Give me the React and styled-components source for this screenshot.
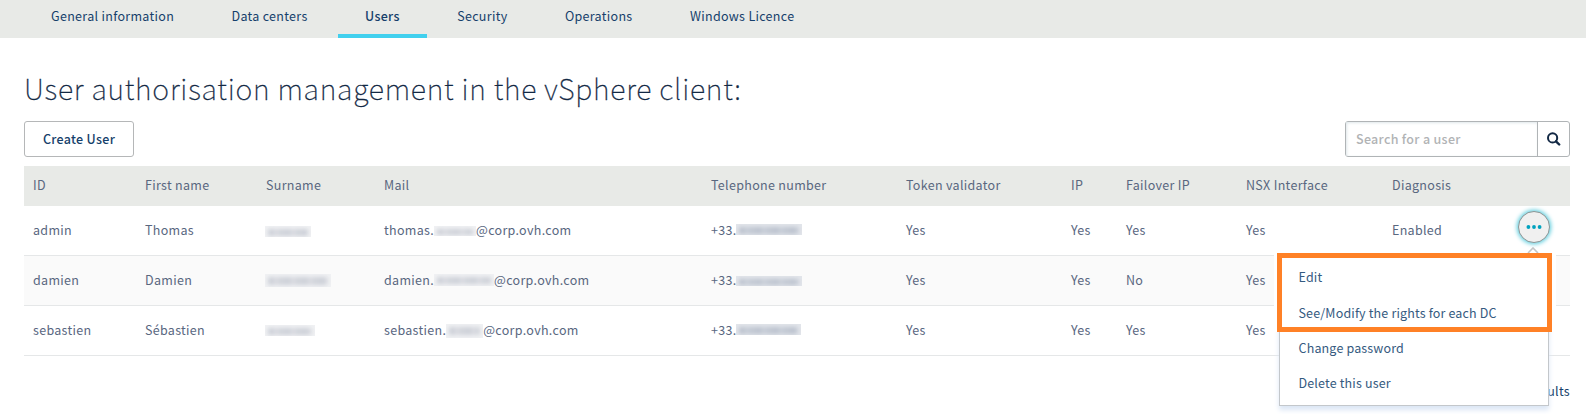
import React from "react";
import styled, { createGlobalStyle } from "styled-components";

const Global = createGlobalStyle`
  * { box-sizing: border-box; }
  html, body { margin: 0; background: #fff; overflow: hidden; }
  body {
    font-family: "Noto Sans CJK SC", "Noto Sans", sans-serif;
    font-size: 12.5px;
    letter-spacing: 0.31px;
    color: #59677f;
  }
`;

const Page = styled.div`
  height: 414px;
  overflow: hidden;
`;

const Tabs = styled.nav`
  display: flex;
  gap: 2.4px;
  height: 38px;
  padding-left: 23.5px;
  background: #e8eae7;
`;

const Tab = styled.a`
  height: 38px;
  padding: 0 27.5px;
  line-height: 31px;
  white-space: nowrap;
  color: #163f6b;
  font-weight: ${(p) => (p.$active ? 500 : 400)};
  border-bottom: 4px solid ${(p) => (p.$active ? "#41d0ee" : "transparent")};
`;

const Main = styled.main`
  padding: 0 16px 0 24px;
`;

const Title = styled.h1`
  height: 83px;
  margin: 0;
  padding-top: 29px;
  line-height: 42px;
  font-size: 28.6px;
  font-weight: 100;
  -webkit-text-stroke: 0.3px #122844;
  letter-spacing: 0.78px;
  color: #122844;
  white-space: nowrap;
`;

const Toolbar = styled.div`
  display: flex;
  justify-content: space-between;
  height: 45px;
`;

const Button = styled.button`
  width: 110px;
  height: 36px;
  padding: 0 0 2px;
  border: 1px solid #b5b7b8;
  border-radius: 3px;
  background: #fff;
  font: inherit;
  font-weight: 500;
  letter-spacing: 0.3px;
  color: #163f6b;
`;

const Search = styled.div`
  display: flex;
  width: 225px;
  height: 36px;
  border: 1px solid #b0b4b6;
  border-radius: 3px;
`;

const Field = styled.div`
  flex: 1;
  padding-left: 10px;
  line-height: 34px;
  font-weight: 500;
  color: #b1b3b5;
  box-shadow: inset 1px 1px 3px #dfe7ea;
`;

const SearchButton = styled.div`
  display: flex;
  align-items: center;
  justify-content: center;
  width: 32px;
  border-left: 1px solid #b0b4b6;
`;

const Row = styled.div`
  display: grid;
  grid-template-columns: 112px 121px 118px 327px 195px 165px 55px 120px 146px 116px 1fr;
  height: ${(p) => (p.$head ? 40 : 50)}px;
  line-height: ${(p) => (p.$head ? 38 : 48)}px;
  background: ${(p) => (p.$head ? "#e8eae7" : p.$striped ? "#fafafa" : "#fff")};
  border-bottom: ${(p) => (p.$head ? "0" : "1px solid #e5e7e8")};
`;

const Cell = styled.div`
  display: flex;
  padding-left: 9px;
  white-space: nowrap;
`;

const Redacted = styled.span`
  flex: none;
  align-self: flex-start;
  overflow: hidden;
  width: ${(p) => p.$w}px;
  height: ${(p) => p.$h}px;
  margin-top: ${(p) => p.$top}px;
  margin-left: ${(p) => p.$left || 0}px;
  background: ${(p) => (p.$dark ? "#e3e6eb" : "#f1f2f4")};

  &::before {
    content: "";
    display: block;
    height: 60%;
    margin: 3px 3px 0;
    filter: blur(2px);
    background: repeating-linear-gradient(
      90deg,
      ${(p) => (p.$dark ? "#bcc2ce" : "#cdd0d8")} 0 5px,
      ${(p) => (p.$dark ? "#c9ced8" : "#d9dbe1")} 7px 9px,
      ${(p) => (p.$dark ? "#c0c6d1" : "#d0d3da")} 11px 17px
    );
  }
`;

const ActionCell = styled.div`
  position: relative;
  display: flex;
  justify-content: flex-end;
  padding: 5px 20px 0 0;
`;

const ActionButton = styled.button`
  display: flex;
  align-items: center;
  justify-content: center;
  width: 32px;
  height: 32px;
  padding: 0;
  border: 1px solid #8b9697;
  border-radius: 50%;
  background: #f0f0f0;
  box-shadow: 0 0 4px 1px #58cbdc;
`;

const Menu = styled.div`
  position: absolute;
  top: 48px;
  right: 21px;
  z-index: 2;
  width: 270px;
  height: 152px;
  border: 1px solid #c3c7cb;
  background: #fff;
  box-shadow: 0 4px 5px #dbe6f5;
  color: #355a80;
  letter-spacing: 0.16px;
`;

const MenuList = styled.div`
  padding-top: 4.3px;
`;

const MenuItem = styled.div`
  height: 35.3px;
  padding-left: 18.5px;
  line-height: 35px;
`;

const Highlight = styled.div`
  position: absolute;
  top: -2px;
  left: -3px;
  width: 275px;
  height: 79px;
  border: 5px solid #ff8126;
  box-shadow: 4px 0 0 #fff, -3px 0 0 #fff;
`;

const Caret = styled.svg`
  position: absolute;
  top: -8px;
  right: 8px;
`;

const Footer = styled.div`
  padding-top: 21px;
  line-height: 28px;
  text-align: right;
  color: #163f6b;
  letter-spacing: 0.3px;
`;

const tabs = ["General information", "Data centers", "Users", "Security", "Operations", "Windows Licence"];

const columns = [
  "ID", "First name", "Surname", "Mail", "Telephone number", "Token validator",
  "IP", "Failover IP", "NSX Interface", "Diagnosis", "",
];

const menuItems = ["Edit", "See/Modify the rights for each DC", "Change password", "Delete this user"];

const users = [
  {
    id: "admin", first: "Thomas", failover: "Yes", diagnosis: "Enabled", open: true,
    surname: { $w: 46, $h: 11, $top: 20 },
    mail: { $w: 42, $h: 10, $top: 20 },
    phone: { $w: 66, $h: 11, $top: 18 },
  },
  {
    id: "damien", first: "Damien", failover: "No", diagnosis: "",
    surname: { $w: 66, $h: 13, $top: 18 },
    mail: { $w: 60, $h: 12, $top: 18 },
    phone: { $w: 66, $h: 10, $top: 20 },
  },
  {
    id: "sebastien", first: "Sébastien", failover: "Yes", diagnosis: "",
    surname: { $w: 50, $h: 11, $top: 19 },
    mail: { $w: 37, $h: 14, $top: 18 },
    phone: { $w: 65, $h: 11, $top: 18 },
  },
];

function SearchIcon() {
  return (
    <svg width="14" height="14" viewBox="0 0 14 14" fill="none" stroke="#122844">
      <circle cx="5.6" cy="5.9" r="4.6" strokeWidth="2" />
      <path d="M9 9.3 L12.2 12.5" strokeWidth="2.4" strokeLinecap="round" />
    </svg>
  );
}

function ActionMenu() {
  return (
    <Menu>
      <MenuList>
        {menuItems.map((item) => (
          <MenuItem key={item}>{item}</MenuItem>
        ))}
      </MenuList>
      <Highlight />
      <Caret width="14" height="6" viewBox="0 0 14 6">
        <path d="M2 6 L7 1 L12 6" fill="#fff" stroke="#c3c5c6" strokeWidth="1.6" />
      </Caret>
    </Menu>
  );
}

function UserRow({ user, striped }) {
  return (
    <Row $striped={striped}>
      <Cell>{user.id}</Cell>
      <Cell>{user.first}</Cell>
      <Cell><Redacted {...user.surname} $left={-1} /></Cell>
      <Cell>{user.id === "admin" ? "thomas" : user.id}.<Redacted {...user.mail} />@corp.ovh.com</Cell>
      <Cell>+33.<Redacted {...user.phone} $left={-1} $dark /></Cell>
      <Cell>Yes</Cell>
      <Cell>Yes</Cell>
      <Cell>{user.failover}</Cell>
      <Cell>Yes</Cell>
      <Cell>{user.diagnosis}</Cell>
      {user.open && (
        <ActionCell>
          <ActionButton aria-label="Actions">
            <svg width="16" height="4" viewBox="0 0 16 4" fill="#00a2bf">
              <circle cx="2.4" cy="2" r="1.9" />
              <circle cx="8" cy="2" r="1.9" />
              <circle cx="13.6" cy="2" r="1.9" />
            </svg>
          </ActionButton>
          <ActionMenu />
        </ActionCell>
      )}
    </Row>
  );
}

export default function App() {
  return (
    <Page>
      <Global />
      <Tabs>
        {tabs.map((tab) => (
          <Tab key={tab} $active={tab === "Users"}>{tab}</Tab>
        ))}
      </Tabs>
      <Main>
        <Title>User authorisation management in the vSphere client:</Title>
        <Toolbar>
          <Button>Create User</Button>
          <Search>
            <Field>Search for a user</Field>
            <SearchButton><SearchIcon /></SearchButton>
          </Search>
        </Toolbar>
        <Row $head>
          {columns.map((column) => (
            <Cell key={column}>{column}</Cell>
          ))}
        </Row>
        {users.map((user, i) => (
          <UserRow key={user.id} user={user} striped={i === 1} />
        ))}
        <Footer>3 results</Footer>
      </Main>
    </Page>
  );
}
